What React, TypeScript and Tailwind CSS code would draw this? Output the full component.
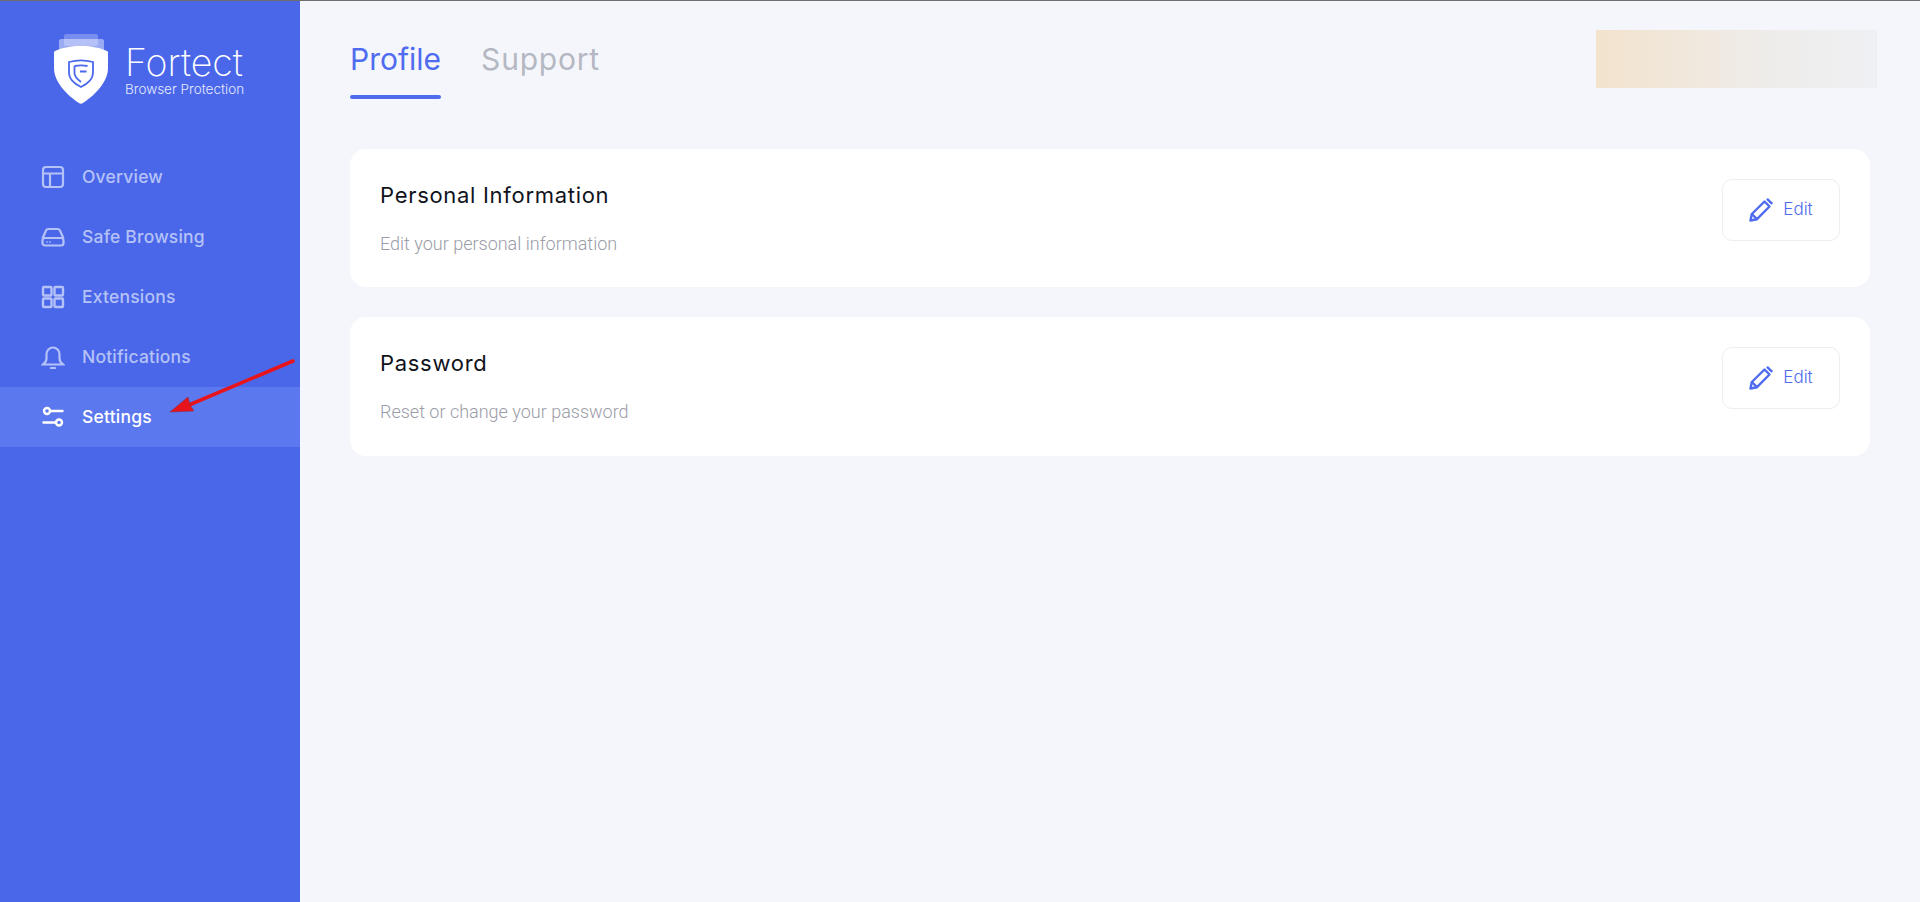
import React from "react";

const font = "[font-family:Inter,'Liberation_Sans',sans-serif]";

function Logo() {
  return (
    <svg width="58" height="72" viewBox="0 0 58 72" fill="none">
      <rect x="10" y="0" width="34" height="12" rx="2" fill="#fff" opacity="0.25" />
      <rect x="5" y="5" width="45" height="12" rx="2" fill="#fff" opacity="0.45" />
      <path d="M27 12c10 0 20 2 26 5 1 .5 1 1 1 2v15c0 14-13 27-25 35-1.500 1-3 1-4 0C13 61 0 48 0 34V19c0-1 0-1.500 1-2 6-3 16-5 26-5Z" fill="#fff" />
      <path d="M15 28c8-2.200 16-2.200 24 0v11c0 6-6 11-12 14-6-3-12-8-12-14V28Z" stroke="#4b69ec" strokeWidth="1.800" fill="none" />
      <path d="M20.500 32c4-.8 9-.8 13 0M20.500 32v7c0 3 2.500 6 6.500 9M26 37.500h6.500" stroke="#4b69ec" strokeWidth="1.800" fill="none" />
    </svg>
  );
}

function IconOverview() {
  return (
    <svg width="24" height="24" viewBox="0 0 24 24" fill="none" stroke="currentColor" strokeWidth="2.200">
      <rect x="2" y="2" width="20" height="20" rx="3" />
      <path d="M2 8.500h20M9 8.500V22" />
    </svg>
  );
}
function IconDrive() {
  return (
    <svg width="24" height="24" viewBox="0 0 24 24" fill="none" stroke="currentColor" strokeWidth="2.200">
      <path d="M1.500 13.500 5 5.500c.5-1 1.300-1.500 2.300-1.500h9.400c1 0 1.800.5 2.300 1.500l3.500 8" />
      <rect x="1.500" y="13" width="21" height="7.500" rx="2.500" />
      <path d="M5.500 17h1M8.500 17h1" />
    </svg>
  );
}
function IconGrid() {
  return (
    <svg width="24" height="24" viewBox="0 0 24 24" fill="none" stroke="currentColor" strokeWidth="2.400">
      <rect x="2" y="2" width="8.500" height="8.500" rx="1" />
      <rect x="13.500" y="2" width="8.500" height="8.500" rx="1" />
      <rect x="2" y="13.500" width="8.500" height="8.500" rx="1" />
      <rect x="13.500" y="13.500" width="8.500" height="8.500" rx="1" />
    </svg>
  );
}
function IconBell() {
  return (
    <svg width="24" height="24" viewBox="0 0 24 24" fill="none" stroke="currentColor" strokeWidth="2.200" strokeLinecap="round">
      <path d="M2 19.500c2-1.500 3.500-3.500 3.500-6V9a6.500 6.500 0 0 1 13 0v4.500c0 2.500 1.500 4.500 3.500 6H2Z" />
      <path d="M10 23h4" />
    </svg>
  );
}
function IconSliders() {
  return (
    <svg width="24" height="24" viewBox="0 0 24 24" fill="none" stroke="currentColor" strokeWidth="2.400" strokeLinecap="round">
      <circle cx="6" cy="6" r="3" />
      <path d="M9.500 6H21.500M2.500 17.500H14" />
      <circle cx="18" cy="17.500" r="3" />
    </svg>
  );
}
function IconPencil() {
  return (
    <svg width="24" height="24" viewBox="0 0 24 24" fill="none" stroke="#4f6bf0" strokeWidth="2.400">
      <path d="M1.500 22.500 2.800 16 15.500 3.500l5 5L8 21.200l-6.500 1.300Z" strokeLinejoin="round" />
      <path d="M2.800 16 8 21.200" />
      <path d="M18 .8 23.200 6" />
    </svg>
  );
}

const items = [
  { label: "Overview", Icon: IconOverview },
  { label: "Safe Browsing", Icon: IconDrive },
  { label: "Extensions", Icon: IconGrid },
  { label: "Notifications", Icon: IconBell },
  { label: "Settings", Icon: IconSliders, active: true },
];

function Card({ title, desc, tall }: { title: string; desc: string; tall?: boolean }) {
  return (
    <div className={`flex items-start justify-between rounded-[16px] bg-white pl-[30px] pr-[30px] pt-[30px] ${tall ? "h-[139px]" : "h-[138px]"}`}>
      <div>
        <div className="text-[22px] leading-[32px] text-[#10131c] tracking-[0.7px]">{title}</div>
        <div className="mt-[21px] text-[18px] leading-[24px] font-light text-[#9a9ca8] [font-family:Roboto,sans-serif]">{desc}</div>
      </div>
      <button className="flex h-[62px] w-[118px] items-center justify-center gap-[10px] rounded-[10px] border border-[#eeeef2] bg-white text-[17px] font-light text-[#4f6bf0]">
        <IconPencil />
        Edit
      </button>
    </div>
  );
}

export default function App() {
  return (
    <div className={`relative flex h-[902px] overflow-hidden border-t border-[#6e6e6e] bg-[#f4f6fb] ${font}`}>
      <aside className="w-[300px] shrink-0 bg-[#4a67ea]">
        <div className="flex h-[146px] items-start pl-[54px] pt-[33px]">
          <Logo />
          <div className="ml-[13px] pt-[10px] text-white">
            <div className="text-[37.500px] leading-[38px] font-extralight">Fortect</div>
            <div className="text-[13.500px] leading-[14px] font-light text-[#e4e9fd]">Browser Protection</div>
          </div>
        </div>
        <nav>
          {items.map(({ label, Icon, active }) => (
            <div
              key={label}
              className={`flex h-[60px] items-center gap-[29px] pl-[41px] text-[17.500px] tracking-[0.2px] ${
                active ? "bg-[#5c78ee] text-white" : "text-[#b5c2f7]"
              }`}
            >
              <span className="h-[24px] w-[24px] shrink-0"><Icon /></span>
              <span className="-ml-[12px] pt-[1px] font-medium">{label}</span>
            </div>
          ))}
        </nav>
      </aside>

      <main className="flex-1 pl-[50px] pr-[50px]">
        <div className="flex h-[148px] items-start justify-between">
          <div className="flex gap-[40px] pt-[38px]">
            <div className="flex h-[60px] flex-col items-stretch justify-between text-[30px] leading-[40px] text-[#4f6bf0]">
              <span>Profile</span>
              <span className="h-[4px] rounded-full bg-[#4f6bf0]" />
            </div>
            <div className="h-[60px] text-[30px] leading-[40px] tracking-[0.8px] text-[#b5b8c2]">Support</div>
          </div>
          <div className="mr-[-7px] mt-[29px] h-[58px] w-[281px] bg-gradient-to-r from-[#f3e3cd] via-[#eeece9] via-60% to-[#eff0f4]" />
        </div>
        <div className="flex flex-col gap-[30px]">
          <Card title="Personal Information" desc="Edit your personal information" />
          <Card title="Password" desc="Reset or change your password" tall />
        </div>
      </main>

      <svg className="absolute left-[165px] top-[355px]" width="135" height="65" viewBox="0 0 135 65" fill="none">
        <path d="M128 5 24 49" stroke="#e8141c" strokeWidth="3.600" strokeLinecap="round" />
        <path d="M5 56 23 41 25 49 29 55Z" fill="#e8141c" stroke="#7a2b44" strokeWidth="0.500" />
      </svg>
    </div>
  );
}
